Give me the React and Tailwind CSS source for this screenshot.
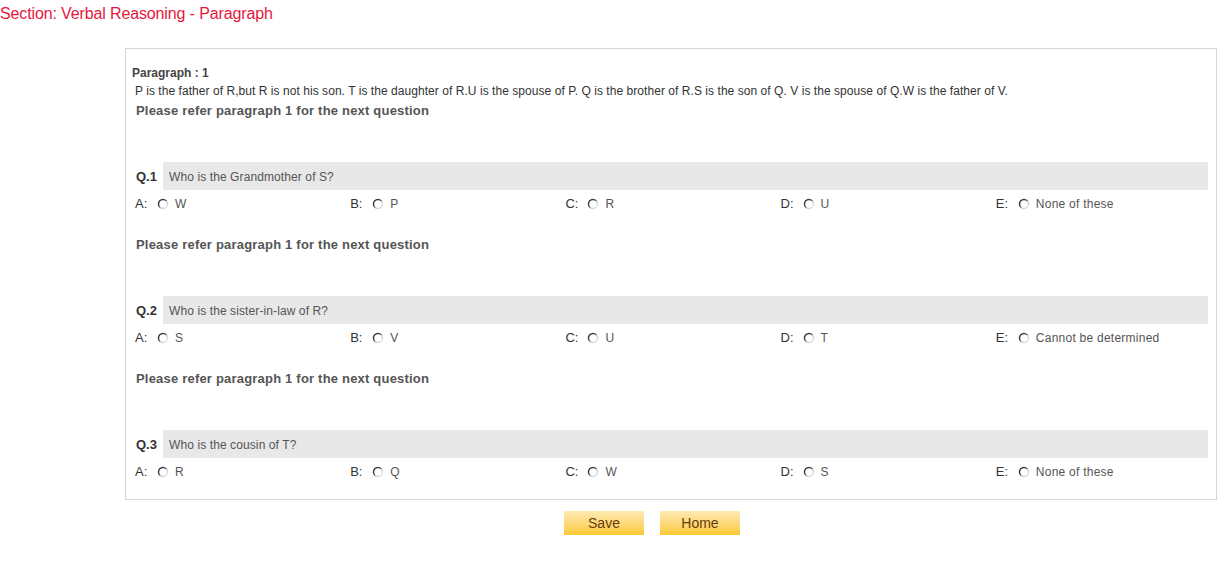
import React from "react";

const Radio = () => (
  <svg width="12" height="12" viewBox="0 0 12 12" className="shrink-0">
    <defs>
      <linearGradient id="rg" x1="0.15" y1="0.15" x2="0.85" y2="0.85">
        <stop offset="0" stopColor="#2e2e2e" />
        <stop offset="0.45" stopColor="#5a5a5a" />
        <stop offset="0.6" stopColor="#c8c8c8" />
        <stop offset="1" stopColor="#e2e2e2" />
      </linearGradient>
    </defs>
    <circle cx="6" cy="6" r="4.5" fill="#fff" stroke="url(#rg)" strokeWidth="1.5" />
  </svg>
);

const questions = [
  { n: "Q.1", q: "Who is the Grandmother of S?", opts: ["W", "P", "R", "U", "None of these"] },
  { n: "Q.2", q: "Who is the sister-in-law of R?", opts: ["S", "V", "U", "T", "Cannot be determined"] },
  { n: "Q.3", q: "Who is the cousin of T?", opts: ["R", "Q", "W", "S", "None of these"] },
];
const letters = ["A", "B", "C", "D", "E"];

export default function App() {
  return (
    <div className="w-[1225px] h-[566px] bg-white" style={{ fontFamily: '"Liberation Sans", Arial, sans-serif' }}>
      <div className="pt-[5px] h-[48px] text-[16px] leading-[18px] tracking-[-0.13px] text-[#e6173d]">Section: Verbal Reasoning - Paragraph</div>
      <div className="ml-[125px] w-[1092px] border border-[#d6d6d6] pt-[15px] pb-[15px]">
        <div className="pl-[6px] text-[12px] leading-[18px] font-bold text-[#444]">Paragraph : 1</div>
        <div className="pl-[9px] text-[12px] leading-[18px] tracking-[0.05px] text-[#333]">
          P is the father of R,but R is not his son. T is the daughter of R.U is the spouse of P. Q is the brother of R.S is the son of Q. V is the spouse of Q.W is the father of V.
        </div>
        {questions.map((item, i) => (
          <div key={item.n} className={i === 0 ? "mt-[2px]" : "mt-[20px]"}>
            <div className="pl-[10px] text-[13px] leading-[18px] font-bold tracking-[0.2px] text-[#555]">Please refer paragraph 1 for the next question</div>
            <div className="mt-[42px] flex h-[28px] pr-[8px]">
              <div className="w-[37px] pl-[10px] pt-[2px] flex items-center text-[13px] font-bold text-[#333]">{item.n}</div>
              <div className="flex-1 bg-[#e8e8e8] pl-[6px] pt-[2px] flex items-center text-[12px] tracking-[0.1px] text-[#555]">{item.q}</div>
            </div>
            <div className="ml-[9px] w-[1076px] grid grid-cols-5 h-[26px] pt-[2px] items-center">
              {item.opts.map((o, j) => (
                <div key={j} className="flex items-center text-[12px]">
                  <span className="w-[22px] text-[13px] text-[#333]">{letters[j]}:</span>
                  <Radio />
                  <span className="ml-[6px] tracking-[0.25px] text-[#555]">{o}</span>
                </div>
              ))}
            </div>
          </div>
        ))}
      </div>
      <div className="ml-[564px] mt-[11px] flex gap-[16px]">
        <button className="w-[80px] h-[24px] bg-gradient-to-b from-[#fde9b0] to-[#fcc92c] text-[14px] text-[#6b3a0c]">Save</button>
        <button className="w-[80px] h-[24px] bg-gradient-to-b from-[#fde9b0] to-[#fcc92c] text-[14px] text-[#6b3a0c]">Home</button>
      </div>
    </div>
  );
}
